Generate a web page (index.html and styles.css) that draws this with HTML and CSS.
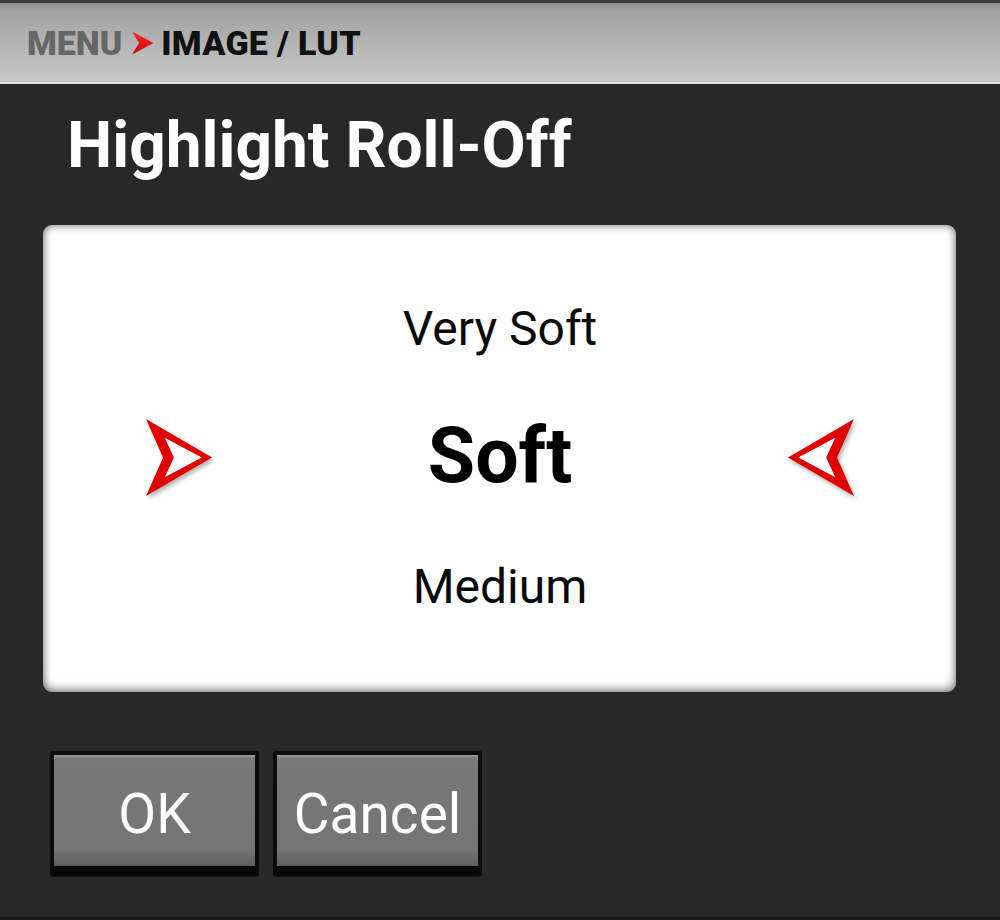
FILE: index.html
```html
<!DOCTYPE html>
<html>
<head>
<meta charset="utf-8">
<link rel="stylesheet" href="styles.css">
</head>
<body>
<div class="screen">
  <header class="crumbs">
    <span class="crumb-parent">MENU</span>
    <svg class="crumb-arrow" width="22" height="24" viewBox="0 0 22 24">
      <defs>
        <linearGradient id="rg" x1="0" y1="0" x2="0" y2="1">
          <stop offset="0" stop-color="#ff2a2a"/>
          <stop offset="1" stop-color="#c40000"/>
        </linearGradient>
      </defs>
      <path d="M0 0.5 L21.5 12 L0 23.5 L7 12 Z" fill="url(#rg)"/>
    </svg>
    <span class="crumb-current">IMAGE / LUT</span>
  </header>

  <h1 class="title">Highlight Roll-Off</h1>

  <section class="picker">
    <svg class="nav-arrow" width="66" height="80" viewBox="0 0 66 80">
      <path fill="#e00000" fill-rule="evenodd" d="M0 1 L66 39.5 L0 78 L17 39.5 Z M19 20 L55.5 39.5 L19 59 L28 39.5 Z"/>
      <path fill="#ffffff" d="M19 20 L55.5 39.5 L19 59 L28 39.5 Z"/>
    </svg>
    <div class="options">
      <div class="opt opt-prev">Very Soft</div>
      <div class="opt opt-current">Soft</div>
      <div class="opt opt-next">Medium</div>
    </div>
    <svg class="nav-arrow nav-arrow-right" width="66" height="80" viewBox="0 0 66 80">
      <path fill="#e00000" fill-rule="evenodd" d="M0 1 L66 39.5 L0 78 L17 39.5 Z M19 20 L55.5 39.5 L19 59 L28 39.5 Z"/>
      <path fill="#ffffff" d="M19 20 L55.5 39.5 L19 59 L28 39.5 Z"/>
    </svg>
  </section>

  <div class="actions">
    <button class="btn"><span>OK</span></button>
    <button class="btn"><span>Cancel</span></button>
  </div>
</div>
</body>
</html>
```

FILE: styles.css
```css
html, body {
  margin: 0;
  padding: 0;
  background: #282828;
}

.screen {
  width: 1000px;
  height: 920px;
  box-sizing: border-box;
  background: #282828;
  font-family: Roboto, "Liberation Sans", Arial, sans-serif;
  border-bottom: 3px solid #1c1c1c;
  overflow: hidden;
}

.crumbs {
  height: 84px;
  box-sizing: border-box;
  border-top: 3px solid #3a3a3a;
  border-bottom: 2px solid #e2e2e2;
  background: linear-gradient(#8e8e8e 0px, #a4a4a4 10px, #b4b4b4 40px, #c8c8c8 100%);
  display: flex;
  align-items: center;
  padding-left: 27px;
  font-size: 34px;
  font-weight: 900;
  letter-spacing: 0;
}

.crumb-parent {
  color: #666666;
}

.crumb-arrow {
  margin: 0 7px 0 10px;
  display: block;
}

.crumb-current {
  color: #111111;
  letter-spacing: 0.3px;
}

.title {
  margin: 30px 0 0 67px;
  font-size: 64px;
  line-height: 64px;
  font-weight: 700;
  color: #ffffff;
  height: 64px;
}

.picker {
  margin: 47px 44px 0 43px;
  height: 467px;
  box-sizing: border-box;
  background: #ffffff;
  border-radius: 9px;
  box-shadow: inset 0 0 9px rgba(0, 0, 0, 0.55), inset 0 -5px 10px rgba(0, 0, 0, 0.18);
  display: grid;
  grid-template-columns: 66px 1fr 66px;
  padding: 0 102px 0 103px;
}

.nav-arrow {
  align-self: center;
  overflow: visible;
  display: block;
  margin-top: -1px;
  filter: drop-shadow(2px 3px 2px rgba(0, 0, 0, 0.3));
}

.nav-arrow-right {
  transform: scaleX(-1);
  filter: drop-shadow(-2px 3px 2px rgba(0, 0, 0, 0.3));
}

.options {
  display: flex;
  flex-direction: column;
  align-items: center;
  padding-top: 80px;
  color: #0a0a0a;
}

.opt {
  line-height: 1;
  white-space: nowrap;
}

.opt-prev {
  font-size: 48px;
  height: 48px;
}

.opt-current {
  font-size: 77px;
  font-weight: 700;
  height: 77px;
  margin-top: 65px;
  color: #000;
}

.opt-next {
  font-size: 48px;
  height: 48px;
  margin-top: 68px;
}

.actions {
  display: flex;
  gap: 14px;
  margin: 59px 0 0 50px;
}

.btn {
  width: 209px;
  height: 125px;
  box-sizing: border-box;
  border: 4px solid #0b0b0b;
  border-bottom: 10px solid #070707;
  border-radius: 3px;
  background: linear-gradient(#9c9c9c 0px, #7c7c7c 3px, #787878 6px, #757575 85%, #5e5e5e 100%);
  box-shadow: 0 1px 0 #111;
  color: #ffffff;
  font-family: Roboto, "Liberation Sans", Arial, sans-serif;
  font-size: 55px;
  font-weight: 400;
  padding: 8px 0 0 0;
  display: flex;
  align-items: center;
  justify-content: center;
  cursor: pointer;
}

.btn span {
  line-height: 1;
}
```
